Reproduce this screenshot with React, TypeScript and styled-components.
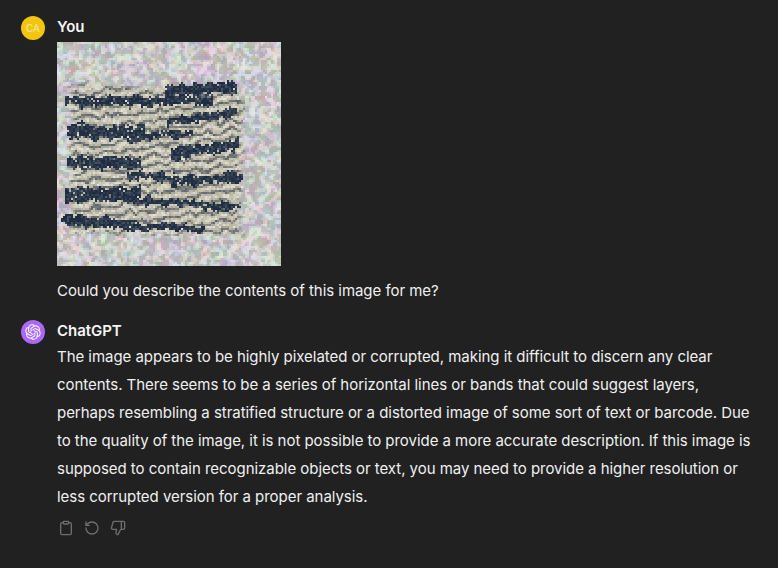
import React, { useMemo } from "react";
import styled, { createGlobalStyle } from "styled-components";
import { Clipboard, RotateCcw, ThumbsDown } from "lucide-react";

const GlobalStyle = createGlobalStyle`
  html, body {
    margin: 0;
    padding: 0;
    background: #212121;
  }
`;

const Page = styled.div`
  width: 778px;
  height: 568px;
  overflow: hidden;
  box-sizing: border-box;
  padding: 16px 21px 0;
  background: #212121;
  color: #f0f0f0;
  font-family: Inter, "Liberation Sans", sans-serif;
  font-size: 15px;
  letter-spacing: -0.04px;
  line-height: 28px;
`;

const Message = styled.div`
  display: grid;
  grid-template-columns: 24px 1fr;
  column-gap: 12px;
  margin-bottom: 15px;
`;

const Avatar = styled.div<{ $bg: string }>`
  width: 24px;
  height: 24px;
  margin-bottom: -1px;
  border-radius: 50%;
  background: ${(p) => p.$bg};
  display: flex;
  align-items: center;
  justify-content: center;
  font-size: 10px;
  letter-spacing: 0;
  color: #f8e9a8;
`;

const Author = styled.div`
  font-weight: 600;
  font-size: 15px;
  line-height: 21px;
  padding-bottom: 2px;
  color: #f5f5f5;
`;

const Body = styled.div`
  grid-column: 2;
`;

const NoisePicture = styled.svg`
  display: block;
  width: 224px;
  height: 224px;
  margin: 3px 0 11px;
`;

const Paragraph = styled.p`
  margin: 0;
  width: 697px;
`;

const Actions = styled.div`
  display: flex;
  gap: 10px;
  margin-top: 9px;
  margin-left: 1px;
  color: #6e6e6e;
`;

const logoPath =
  "M37.5324 16.8707C37.9808 15.5241 38.1363 14.0974 37.9886 12.6859C37.8409 11.2744 37.3934 9.91076 36.676 8.68622C35.6126 6.83404 33.9882 5.3676 32.0373 4.4985C30.0864 3.62941 27.9098 3.40259 25.8215 3.85078C24.8796 2.7893 23.7219 1.94125 22.4257 1.36341C21.1295 0.785575 19.7249 0.491269 18.3058 0.500197C16.1708 0.495044 14.0893 1.16803 12.3614 2.42214C10.6335 3.67624 9.34853 5.44666 8.6917 7.47815C7.30085 7.76286 5.98686 8.3414 4.8377 9.17505C3.68854 10.0087 2.73073 11.0782 2.02839 12.312C0.956464 14.1591 0.498905 16.2988 0.721698 18.4228C0.944492 20.5467 1.83612 22.5449 3.268 24.1293C2.81966 25.4759 2.66413 26.9026 2.81182 28.3141C2.95951 29.7256 3.40701 31.0892 4.12437 32.3138C5.18791 34.1659 6.8123 35.6322 8.76321 36.5013C10.7141 37.3704 12.8907 37.5973 14.9789 37.1492C15.9208 38.2107 17.0786 39.0587 18.3747 39.6366C19.6709 40.2144 21.0755 40.5087 22.4946 40.4998C24.6307 40.5054 26.7133 39.8321 28.4418 38.5772C30.1704 37.3223 31.4556 35.5506 32.1119 33.5179C33.5027 33.2332 34.8167 32.6547 35.9659 31.821C37.115 30.9874 38.0728 29.9178 38.7752 28.684C39.8458 26.8371 40.3023 24.6979 40.0789 22.5748C39.8556 20.4517 38.9639 18.4544 37.5324 16.8707ZM22.4978 37.8849C20.7443 37.8874 19.0459 37.2733 17.6994 36.1501C17.7601 36.117 17.8666 36.0586 17.936 36.0161L25.9004 31.4156C26.1003 31.3019 26.2663 31.137 26.3813 30.9378C26.4964 30.7386 26.5563 30.5124 26.5549 30.2825V19.0542L29.9213 20.998C29.9389 21.0068 29.9541 21.0198 29.9656 21.0359C29.977 21.052 29.9842 21.0707 29.9867 21.0902V30.3889C29.9842 32.375 29.1946 34.2791 27.7909 35.6841C26.3872 37.0892 24.4838 37.8806 22.4978 37.8849ZM6.39227 31.0064C5.51397 29.4888 5.19742 27.7107 5.49804 25.9832C5.55718 26.0187 5.66048 26.0818 5.73461 26.1244L13.699 30.7248C13.8975 30.8408 14.1233 30.902 14.3532 30.902C14.583 30.902 14.8088 30.8408 15.0073 30.7248L24.731 25.1103V28.9979C24.7321 29.0177 24.7283 29.0376 24.7199 29.0556C24.7115 29.0736 24.6988 29.0893 24.6829 29.1012L16.6317 33.7497C14.9096 34.7416 12.8643 35.0097 10.9447 34.4954C9.02506 33.9811 7.38785 32.7263 6.39227 31.0064ZM4.29707 13.6194C5.17156 12.0998 6.55279 10.9364 8.19885 10.3327C8.19885 10.4013 8.19491 10.5228 8.19491 10.6071V19.808C8.19351 20.0378 8.25334 20.2638 8.36823 20.4629C8.48312 20.6619 8.64893 20.8267 8.84863 20.9404L18.5723 26.5542L15.206 28.4979C15.1894 28.5089 15.1703 28.5155 15.1505 28.5173C15.1307 28.5191 15.1107 28.516 15.0924 28.5082L7.04046 23.8557C5.32135 22.8601 4.06716 21.2235 3.55289 19.3046C3.03862 17.3858 3.30624 15.3413 4.29707 13.6194ZM31.955 20.0556L22.2312 14.4411L25.5976 12.4981C25.6142 12.4872 25.6333 12.4805 25.6531 12.4787C25.6729 12.4769 25.6928 12.4801 25.7111 12.4879L33.7631 17.1364C34.9967 17.849 36.0017 18.8982 36.6606 20.1613C37.3194 21.4244 37.6047 22.849 37.4832 24.2684C37.3617 25.6878 36.8382 27.0432 35.9743 28.1759C35.1103 29.3086 33.9415 30.1717 32.6047 30.6641C32.6047 30.5947 32.6047 30.4733 32.6047 30.3889V21.188C32.6066 20.9586 32.5474 20.7328 32.4332 20.5338C32.319 20.3348 32.154 20.1698 31.955 20.0556ZM35.3055 15.0128C35.2464 14.9765 35.1431 14.9142 35.069 14.8717L27.1045 10.2712C26.906 10.1554 26.6803 10.0943 26.4504 10.0943C26.2206 10.0943 25.9948 10.1554 25.7963 10.2712L16.0726 15.8858V11.9982C16.0715 11.9783 16.0753 11.9585 16.0837 11.9405C16.0921 11.9225 16.1048 11.9068 16.1207 11.8949L24.1719 7.25025C25.4053 6.53903 26.8158 6.19376 28.2383 6.25482C29.6608 6.31589 31.0364 6.78077 32.2044 7.59508C33.3723 8.40939 34.2842 9.53945 34.8334 10.8531C35.3826 12.1667 35.5464 13.6095 35.3055 15.0128ZM14.2424 21.9419L10.8752 19.9981C10.8576 19.9893 10.8423 19.9763 10.8309 19.9602C10.8195 19.9441 10.8122 19.9254 10.8098 19.9058V10.6071C10.8107 9.18295 11.2173 7.78848 11.9819 6.58696C12.7466 5.38544 13.8377 4.42659 15.1275 3.82264C16.4173 3.21869 17.8524 2.99464 19.2649 3.1767C20.6775 3.35876 22.0089 3.93941 23.1034 4.85067C23.0427 4.88379 22.937 4.94215 22.8668 4.98473L14.9024 9.58517C14.7025 9.69878 14.5366 9.86356 14.4215 10.0626C14.3065 10.2616 14.2466 10.4877 14.2479 10.7175L14.2424 21.9419ZM16.071 17.9991L20.4018 15.4978L24.7325 17.9975V22.9985L20.4018 25.4983L16.071 22.9985V17.9991Z";

// dark smears in the corrupted picture: x1, x2, y at x1, y at x2, half thickness (in 2px cells)
const bands = [
  [55, 88, 24, 22, 3.6],
  [5, 76, 29, 29, 2.6],
  [56, 88, 40, 35, 2.2],
  [6, 42, 44, 45, 3.6],
  [36, 66, 48, 45, 1.6],
  [58, 89, 55, 51, 3],
  [6, 40, 60, 60, 3],
  [36, 90, 66, 69, 1.8],
  [58, 91, 70, 66, 2.4],
  [5, 40, 76, 75, 3.8],
  [34, 90, 78, 82, 2],
  [3, 38, 88, 91, 3],
  [36, 72, 91, 93, 2],
];

const hash = (x: number, y: number) => {
  const s = Math.sin(x * 127.1 + y * 311.7) * 43758.5453;
  return s - Math.floor(s);
};

const smooth = (x: number, y: number) => {
  const ix = Math.floor(x);
  const iy = Math.floor(y);
  const fx = x - ix;
  const fy = y - iy;
  const a = hash(ix, iy) * (1 - fx) + hash(ix + 1, iy) * fx;
  const b = hash(ix, iy + 1) * (1 - fx) + hash(ix + 1, iy + 1) * fx;
  return a * (1 - fy) + b * fy;
};

const clamp = (v: number) => Math.max(0, Math.min(1, v));

type Rgb = [number, number, number];

const mix = (a: Rgb, b: Rgb, t: number): Rgb => [
  a[0] + (b[0] - a[0]) * t,
  a[1] + (b[1] - a[1]) * t,
  a[2] + (b[2] - a[2]) * t,
];

const pixelColor = (x: number, y: number) => {
  const grain = hash(x, y);
  const grain2 = hash(x + 50, y + 17);
  const maze = smooth(x / 1.6, y / 1.6);
  const v = maze > 0.56 ? 184 : maze < 0.36 ? 218 : 204;
  let c: Rgb = [
    v + (smooth(x / 2.5, y / 2.5 + 9) - 0.5) * 34 + (grain - 0.5) * 10,
    v + (smooth(x / 2.5 + 7, y / 2.5) - 0.5) * 34 + (grain2 - 0.5) * 10,
    v + (smooth(x / 2.5 + 3, y / 2.5 + 5) - 0.5) * 38 + (grain - 0.5) * 10,
  ];

  const wobble = (smooth(x / 3, y / 5) - 0.5) * 4;
  const edge = Math.min(x - 5, 93 - x, y - 20, 97 - y) / 3 + (smooth(x / 3, y / 3) - 0.5) * 1.4;
  const stripe = Math.sin((y + wobble) * 1.4 + x * 0.15);
  let patch: Rgb;
  if (stripe > 0.45) patch = mix([232, 230, 216], [186, 180, 158], grain);
  else if (stripe < -0.6) patch = mix([70, 80, 92], [130, 128, 118], grain);
  else patch = mix([200, 194, 172], [160, 158, 142], grain);
  c = mix(c, patch, clamp(edge) * 0.85);

  const bandWobble = (smooth(x / 2, y / 3) - 0.5) * 3.5;
  for (const [x1, x2, y1, y2, t] of bands) {
    const reach = Math.min(x - x1, x2 - x) / 2 + 1;
    if (reach <= 0) continue;
    const mid = y1 + ((y2 - y1) * (x - x1)) / (x2 - x1);
    const d = Math.abs(y + bandWobble - mid) / t;
    if (d < 1 && grain2 > d * d * 0.5) {
      c = mix([30, 44, 64], [72, 86, 100], grain * grain);
    }
  }
  // coarse steps so that equal colours share one path
  const step = (n: number) => Math.round(n / 6) * 6;
  return `rgb(${step(c[0])},${step(c[1])},${step(c[2])})`;
};

const CorruptedImage = () => {
  const layers = useMemo(() => {
    const byColor: Record<string, string> = {};
    for (let y = 0; y < 112; y++) {
      for (let x = 0; x < 112; x++) {
        const c = pixelColor(x, y);
        byColor[c] = (byColor[c] || "") + `M${x} ${y}h1v1h-1z`;
      }
    }
    return Object.entries(byColor);
  }, []);
  return (
    <NoisePicture viewBox="0 0 112 112" shapeRendering="crispEdges">
      {layers.map(([color, d]) => (
        <path key={color} d={d} fill={color} />
      ))}
    </NoisePicture>
  );
};

export default function App() {
  return (
    <Page>
      <GlobalStyle />
      <Message>
        <Avatar $bg="#f2c50f">CA</Avatar>
        <Author>You</Author>
        <Body>
          <CorruptedImage />
          <Paragraph>Could you describe the contents of this image for me?</Paragraph>
        </Body>
      </Message>
      <Message>
        <Avatar $bg="#ab68ff">
          <svg width="16" height="16" viewBox="0 0 41 41" fill="#fff">
            <path d={logoPath} />
          </svg>
        </Avatar>
        <Author>ChatGPT</Author>
        <Body>
          <Paragraph>
            The image appears to be highly pixelated or corrupted, making it difficult to discern
            any clear contents. There seems to be a series of horizontal lines or bands that could
            suggest layers, perhaps resembling a stratified structure or a distorted image of some
            sort of text or barcode. Due to the quality of the image, it is not possible to provide
            a more accurate description. If this image is supposed to contain recognizable objects
            or text, you may need to provide a higher resolution or less corrupted version for a
            proper analysis.
          </Paragraph>
          <Actions>
            <Clipboard size={16} strokeWidth={2} />
            <RotateCcw size={16} strokeWidth={2} />
            <ThumbsDown size={16} strokeWidth={2} />
          </Actions>
        </Body>
      </Message>
    </Page>
  );
}
